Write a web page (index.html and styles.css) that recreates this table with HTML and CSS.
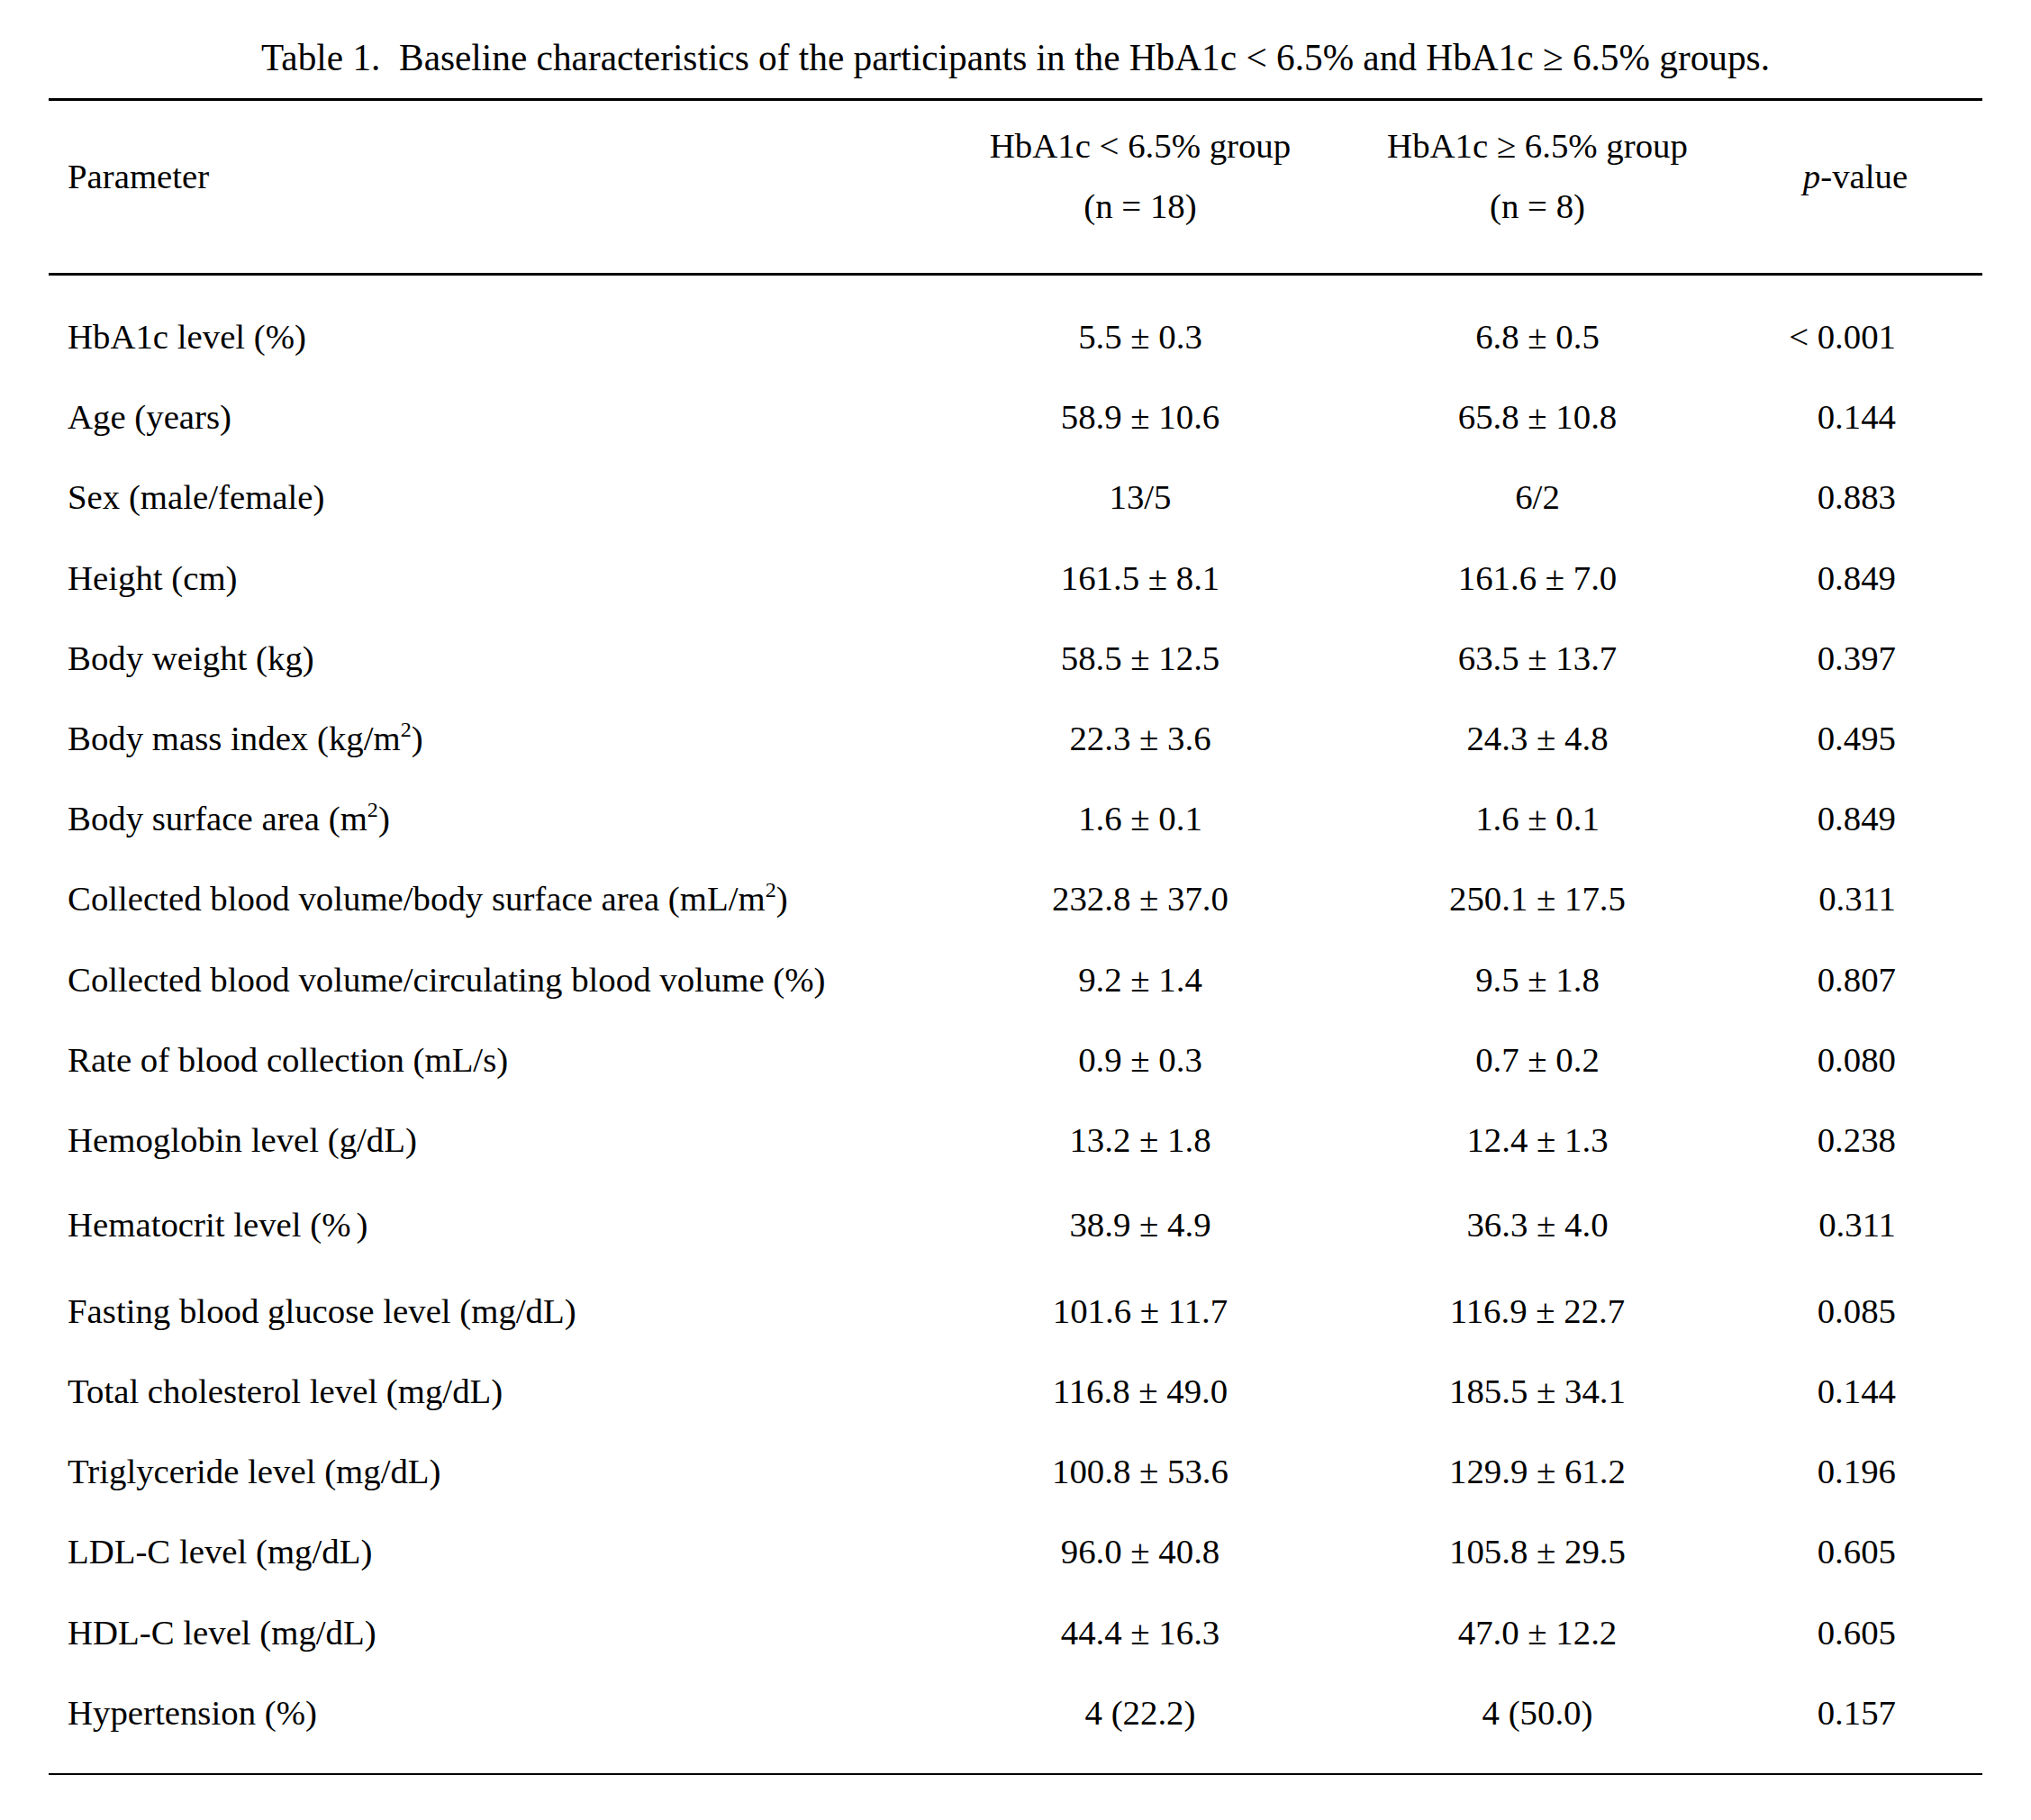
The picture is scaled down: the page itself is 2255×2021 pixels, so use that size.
FILE: index.html
```html
<!DOCTYPE html>
<html>
<head>
<meta charset="utf-8">
<link rel="stylesheet" href="styles.css">
</head>
<body>
<div class="page">
  <div class="caption">Table 1.&nbsp; Baseline characteristics of the participants in the HbA1c &lt; 6.5% and HbA1c ≥ 6.5% groups.</div>
  <div class="table">
    <div class="head">
      <div class="hcell param">Parameter</div>
      <div class="hcell grp"><span>HbA1c &lt; 6.5% group</span><span>(n = 18)</span></div>
      <div class="hcell grp"><span>HbA1c ≥ 6.5% group</span><span>(n = 8)</span></div>
      <div class="hcell pv"><span><i>p</i>-value</span></div>
    </div>
    <div class="body">
      <div class="row"><div class="c1">HbA1c level (%)</div><div class="c2">5.5 ± 0.3</div><div class="c3">6.8 ± 0.5</div><div class="c4">&lt; 0.001</div></div>
      <div class="row"><div class="c1">Age (years)</div><div class="c2">58.9 ± 10.6</div><div class="c3">65.8 ± 10.8</div><div class="c4">0.144</div></div>
      <div class="row"><div class="c1">Sex (male/female)</div><div class="c2">13/5</div><div class="c3">6/2</div><div class="c4">0.883</div></div>
      <div class="row"><div class="c1">Height (cm)</div><div class="c2">161.5 ± 8.1</div><div class="c3">161.6 ± 7.0</div><div class="c4">0.849</div></div>
      <div class="row"><div class="c1">Body weight (kg)</div><div class="c2">58.5 ± 12.5</div><div class="c3">63.5 ± 13.7</div><div class="c4">0.397</div></div>
      <div class="row"><div class="c1">Body mass index (kg/m<sup>2</sup>)</div><div class="c2">22.3 ± 3.6</div><div class="c3">24.3 ± 4.8</div><div class="c4">0.495</div></div>
      <div class="row"><div class="c1">Body surface area (m<sup>2</sup>)</div><div class="c2">1.6 ± 0.1</div><div class="c3">1.6 ± 0.1</div><div class="c4">0.849</div></div>
      <div class="row"><div class="c1">Collected blood volume/body surface area (mL/m<sup>2</sup>)</div><div class="c2">232.8 ± 37.0</div><div class="c3">250.1 ± 17.5</div><div class="c4">0.311</div></div>
      <div class="row"><div class="c1">Collected blood volume/circulating blood volume (%)</div><div class="c2">9.2 ± 1.4</div><div class="c3">9.5 ± 1.8</div><div class="c4">0.807</div></div>
      <div class="row"><div class="c1">Rate of blood collection (mL/s)</div><div class="c2">0.9 ± 0.3</div><div class="c3">0.7 ± 0.2</div><div class="c4">0.080</div></div>
      <div class="row"><div class="c1">Hemoglobin level (g/dL)</div><div class="c2">13.2 ± 1.8</div><div class="c3">12.4 ± 1.3</div><div class="c4">0.238</div></div>
      <div class="row tall"><div class="c1">Hematocrit level (%<span class="gap">)</span></div><div class="c2">38.9 ± 4.9</div><div class="c3">36.3 ± 4.0</div><div class="c4">0.311</div></div>
      <div class="row"><div class="c1">Fasting blood glucose level (mg/dL)</div><div class="c2">101.6 ± 11.7</div><div class="c3">116.9 ± 22.7</div><div class="c4">0.085</div></div>
      <div class="row"><div class="c1">Total cholesterol level (mg/dL)</div><div class="c2">116.8 ± 49.0</div><div class="c3">185.5 ± 34.1</div><div class="c4">0.144</div></div>
      <div class="row"><div class="c1">Triglyceride level (mg/dL)</div><div class="c2">100.8 ± 53.6</div><div class="c3">129.9 ± 61.2</div><div class="c4">0.196</div></div>
      <div class="row"><div class="c1">LDL-C level (mg/dL)</div><div class="c2">96.0 ± 40.8</div><div class="c3">105.8 ± 29.5</div><div class="c4">0.605</div></div>
      <div class="row"><div class="c1">HDL-C level (mg/dL)</div><div class="c2">44.4 ± 16.3</div><div class="c3">47.0 ± 12.2</div><div class="c4">0.605</div></div>
      <div class="row"><div class="c1">Hypertension (%)</div><div class="c2">4 (22.2)</div><div class="c3">4 (50.0)</div><div class="c4">0.157</div></div>
    </div>
  </div>
</div>
</body>
</html>
```
FILE: styles.css
```css
html, body {
  margin: 0;
  padding: 0;
  background: #fff;
}
body {
  font-family: "Liberation Serif", "Times New Roman", serif;
  color: #000;
}
.page {
  width: 2147px;
  margin-left: 54px;
  padding-top: 38px;
}
.caption {
  font-size: 41.3px;
  line-height: 52px;
  text-align: center;
  height: 71px;
}
.table {
  border-top: 3px solid #000;
  border-bottom: 2px solid #000;
}
.head, .row {
  display: grid;
  grid-template-columns: 992px 440px 442px 264px 1fr;
  font-size: 38.8px;
}
.head {
  border-bottom: 3px solid #000;
  padding: 16px 0 41px;
  line-height: 67px;
}
.hcell {
  display: flex;
  flex-direction: column;
  justify-content: center;
}
.param {
  padding-left: 21px;
}
.grp {
  align-items: center;
}
.pv {
  align-items: center;
}
.body {
  padding: 23px 0 23px;
}
.row {
  height: 89.2px;
  line-height: 89.2px;
  white-space: nowrap;
}
.row.tall {
  height: 100.7px;
  line-height: 100.7px;
}
.c1 {
  padding-left: 21px;
}
.c2, .c3 {
  text-align: center;
}
.c4 {
  text-align: right;
  padding-right: 87px;
}
sup {
  font-size: 0.62em;
  line-height: 0;
  vertical-align: 0.62em;
}
.gap {
  margin-left: 6px;
}
```
